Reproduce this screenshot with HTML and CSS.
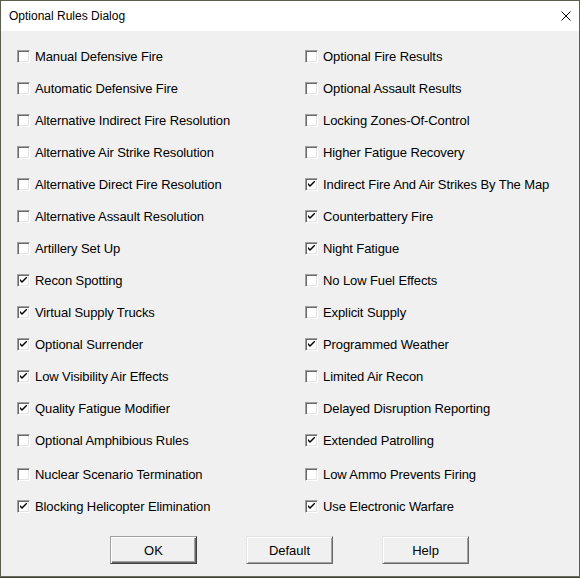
FILE: index.html
```html
<!DOCTYPE html>
<html>
<head>
<meta charset="utf-8">
<link rel="stylesheet" href="styles.css">
</head>
<body>
<div class="window">
  <div class="titlebar">
    <span class="title">Optional Rules Dialog</span>
    <svg class="close" width="10" height="10" viewBox="0 0 10 10"><path d="M0.5 0.5 L9.5 9.5 M9.5 0.5 L0.5 9.5" stroke="#000" stroke-width="1" fill="none"/></svg>
  </div>
  <div class="content">
    <div class="grid">
      <div class="col">
        <div class="row"><span class="cb"></span><span class="lbl">Manual Defensive Fire</span></div>
        <div class="row"><span class="cb"></span><span class="lbl">Automatic Defensive Fire</span></div>
        <div class="row"><span class="cb"></span><span class="lbl">Alternative Indirect Fire Resolution</span></div>
        <div class="row"><span class="cb"></span><span class="lbl">Alternative Air Strike Resolution</span></div>
        <div class="row"><span class="cb"></span><span class="lbl">Alternative Direct Fire Resolution</span></div>
        <div class="row"><span class="cb"></span><span class="lbl">Alternative Assault Resolution</span></div>
        <div class="row"><span class="cb"></span><span class="lbl">Artillery Set Up</span></div>
        <div class="row"><span class="cb on"><svg viewBox="0 0 7 7" width="7" height="7"><path d="M0 2 L0 4 L2 6 L7 1 L7 -1 L2 4 Z" fill="#000"/></svg></span><span class="lbl">Recon Spotting</span></div>
        <div class="row"><span class="cb on"><svg viewBox="0 0 7 7" width="7" height="7"><path d="M0 2 L0 4 L2 6 L7 1 L7 -1 L2 4 Z" fill="#000"/></svg></span><span class="lbl">Virtual Supply Trucks</span></div>
        <div class="row"><span class="cb on"><svg viewBox="0 0 7 7" width="7" height="7"><path d="M0 2 L0 4 L2 6 L7 1 L7 -1 L2 4 Z" fill="#000"/></svg></span><span class="lbl">Optional Surrender</span></div>
        <div class="row"><span class="cb on"><svg viewBox="0 0 7 7" width="7" height="7"><path d="M0 2 L0 4 L2 6 L7 1 L7 -1 L2 4 Z" fill="#000"/></svg></span><span class="lbl">Low Visibility Air Effects</span></div>
        <div class="row"><span class="cb on"><svg viewBox="0 0 7 7" width="7" height="7"><path d="M0 2 L0 4 L2 6 L7 1 L7 -1 L2 4 Z" fill="#000"/></svg></span><span class="lbl">Quality Fatigue Modifier</span></div>
        <div class="row"><span class="cb"></span><span class="lbl">Optional Amphibious Rules</span></div>
        <div class="row gap"><span class="cb"></span><span class="lbl">Nuclear Scenario Termination</span></div>
        <div class="row"><span class="cb on"><svg viewBox="0 0 7 7" width="7" height="7"><path d="M0 2 L0 4 L2 6 L7 1 L7 -1 L2 4 Z" fill="#000"/></svg></span><span class="lbl">Blocking Helicopter Elimination</span></div>
      </div>
      <div class="col">
        <div class="row"><span class="cb"></span><span class="lbl">Optional Fire Results</span></div>
        <div class="row"><span class="cb"></span><span class="lbl">Optional Assault Results</span></div>
        <div class="row"><span class="cb"></span><span class="lbl">Locking Zones-Of-Control</span></div>
        <div class="row"><span class="cb"></span><span class="lbl">Higher Fatigue Recovery</span></div>
        <div class="row"><span class="cb on"><svg viewBox="0 0 7 7" width="7" height="7"><path d="M0 2 L0 4 L2 6 L7 1 L7 -1 L2 4 Z" fill="#000"/></svg></span><span class="lbl">Indirect Fire And Air Strikes By The Map</span></div>
        <div class="row"><span class="cb on"><svg viewBox="0 0 7 7" width="7" height="7"><path d="M0 2 L0 4 L2 6 L7 1 L7 -1 L2 4 Z" fill="#000"/></svg></span><span class="lbl">Counterbattery Fire</span></div>
        <div class="row"><span class="cb on"><svg viewBox="0 0 7 7" width="7" height="7"><path d="M0 2 L0 4 L2 6 L7 1 L7 -1 L2 4 Z" fill="#000"/></svg></span><span class="lbl">Night Fatigue</span></div>
        <div class="row"><span class="cb"></span><span class="lbl">No Low Fuel Effects</span></div>
        <div class="row"><span class="cb"></span><span class="lbl">Explicit Supply</span></div>
        <div class="row"><span class="cb on"><svg viewBox="0 0 7 7" width="7" height="7"><path d="M0 2 L0 4 L2 6 L7 1 L7 -1 L2 4 Z" fill="#000"/></svg></span><span class="lbl">Programmed Weather</span></div>
        <div class="row"><span class="cb"></span><span class="lbl">Limited Air Recon</span></div>
        <div class="row"><span class="cb"></span><span class="lbl">Delayed Disruption Reporting</span></div>
        <div class="row"><span class="cb on"><svg viewBox="0 0 7 7" width="7" height="7"><path d="M0 2 L0 4 L2 6 L7 1 L7 -1 L2 4 Z" fill="#000"/></svg></span><span class="lbl">Extended Patrolling</span></div>
        <div class="row gap"><span class="cb"></span><span class="lbl">Low Ammo Prevents Firing</span></div>
        <div class="row"><span class="cb on"><svg viewBox="0 0 7 7" width="7" height="7"><path d="M0 2 L0 4 L2 6 L7 1 L7 -1 L2 4 Z" fill="#000"/></svg></span><span class="lbl">Use Electronic Warfare</span></div>
      </div>
    </div>
    <div class="buttons">
      <button class="btn default">OK</button>
      <button class="btn">Default</button>
      <button class="btn">Help</button>
    </div>
  </div>
</div>
</body>
</html>
```
FILE: styles.css
```css
html, body {
  margin: 0;
  padding: 0;
}
body {
  width: 580px;
  height: 578px;
  background: #3d4232;
  overflow: hidden;
}
.window {
  width: 578px;
  height: 575px;
  border: 1px solid #5a5f4c;
  border-bottom: 1px solid #6a6e5c;
  background: #f0f0f0;
  display: flex;
  flex-direction: column;
}
.titlebar {
  height: 30px;
  background: #ffffff;
  display: flex;
  align-items: center;
  padding-left: 8px;
  padding-right: 8px;
}
.title {
  font-family: "Liberation Sans", Arial, sans-serif;
  font-size: 12px;
  color: #000;
  flex: 1;
  padding-bottom: 1px;
}
.close {
  display: block;
  margin-bottom: 1px;
}
.content {
  flex: 1;
  padding: 9px 0 0 16px;
  font-family: "Liberation Sans", Arial, sans-serif;
  font-size: 13px;
  letter-spacing: -0.1px;
  color: #000;
}
.grid {
  display: grid;
  grid-template-columns: 288px 1fr;
}
.col {
  display: flex;
  flex-direction: column;
}
.row {
  height: 32px;
  display: flex;
  align-items: center;
}
.row.gap {
  margin-top: 2px;
}
.cb {
  width: 11px;
  height: 11px;
  background: #fff;
  border: 1px solid;
  border-color: #a0a0a0 #ffffff #ffffff #a0a0a0;
  box-shadow: inset 1px 1px 0 #696969, inset -1px -1px 0 #e3e3e3;
  display: flex;
  align-items: center;
  justify-content: center;
  flex: none;
}
.cb svg {
  display: block;
}
.lbl {
  margin-left: 5px;
  white-space: nowrap;
}
.buttons {
  display: flex;
  margin-top: 14px;
  padding-left: 93px;
  gap: 49px;
}
.btn {
  width: 87px;
  height: 28px;
  margin: 0;
  padding: 0;
  font-family: "Liberation Sans", Arial, sans-serif;
  font-size: 13px;
  color: #000;
  background: #f0f0f0;
  border: 1px solid;
  border-color: #e3e3e3 #696969 #696969 #e3e3e3;
  box-shadow: inset 1px 1px 0 #ffffff, inset -1px -1px 0 #a0a0a0;
}
.btn.default {
  border: 1px solid #696969;
  border-color: #a0a0a0 #404040 #404040 #a0a0a0;
  box-shadow: inset 1px 1px 0 #ffffff, inset -1px -1px 0 #696969, inset -2px -2px 0 #a0a0a0;
}
```
